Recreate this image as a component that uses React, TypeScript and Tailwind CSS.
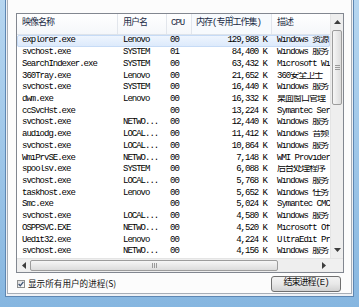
import React from "react";

type Row = [string, string, string, string, string];

// descriptions are cut where the column ends in the original window
const rows: Row[] = [
  ["explorer.exe", "Lenovo", "00", "129,988 K", "Windows 资源"],
  ["svchost.exe", "SYSTEM", "01", "84,400 K", "Windows 服务"],
  ["SearchIndexer.exe", "SYSTEM", "00", "63,432 K", "Microsoft Wi"],
  ["360Tray.exe", "Lenovo", "00", "21,652 K", "360安全卫士"],
  ["svchost.exe", "SYSTEM", "00", "16,440 K", "Windows 服务"],
  ["dwm.exe", "Lenovo", "00", "16,332 K", "桌面窗口管理"],
  ["ccSvcHst.exe", "", "00", "13,224 K", "Symantec Ser"],
  ["svchost.exe", "NETWO...", "00", "12,440 K", "Windows 服务"],
  ["audiodg.exe", "LOCAL...", "00", "11,412 K", "Windows 音频"],
  ["svchost.exe", "LOCAL...", "00", "10,864 K", "Windows 服务"],
  ["WmiPrvSE.exe", "NETWO...", "00", "7,148 K", "WMI Provider"],
  ["spoolsv.exe", "SYSTEM", "00", "6,088 K", "后台处理程序"],
  ["svchost.exe", "LOCAL...", "00", "5,768 K", "Windows 服务"],
  ["taskhost.exe", "Lenovo", "00", "5,652 K", "Windows 任务"],
  ["Smc.exe", "", "00", "5,024 K", "Symantec CMC"],
  ["svchost.exe", "LOCAL...", "00", "4,580 K", "Windows 服务"],
  ["OSPPSVC.EXE", "NETWO...", "00", "4,520 K", "Microsoft Of"],
  ["Uedit32.exe", "Lenovo", "00", "4,224 K", "UltraEdit Pr"],
  ["svchost.exe", "NETWO...", "00", "4,156 K", "Windows 服务"],
];

const mono = "font-['Liberation_Mono','Noto_Sans_CJK_SC',monospace] text-[9px] tracking-[-1px]";

const Arrow = ({ dir }: { dir: "up" | "down" | "left" | "right" }) => {
  const pts = {
    up: "0,4 3.5,0 7,4",
    down: "0,0 3.5,4 7,0",
    left: "4,0 0,3.5 4,7",
    right: "0,0 4,3.5 0,7",
  }[dir];
  const vert = dir === "up" || dir === "down";
  return (
    <svg width={vert ? 7 : 4} height={vert ? 4 : 7} viewBox={vert ? "0 0 7 4" : "0 0 4 7"}>
      <polygon points={pts} fill="#3c3c3c" />
    </svg>
  );
};

const App = () => {
  return (
    <div className="w-[359px] h-[307px] bg-gradient-to-b from-[#b6d6f0] to-[#86b6e0] pl-[5px] pr-[6px] pb-[10px] flex">
      {/* window body */}
      <div className="flex-1 bg-[#eef1f5] border-l border-r border-b border-[#5d87b3] pl-[1px] pr-[1px] pb-[2px] flex">
        {/* tab page */}
        <div className="flex-1 bg-[#fcfcfc] border-l border-r border-b border-[#a7aeb7] pl-[8px] pr-[7px] pt-[13px] flex flex-col">
          {/* list view */}
          <div className="w-[328px] border border-[#828790] bg-white flex flex-col">
            <div className="flex">
              <div className="w-[313px] flex flex-col">
                {/* header */}
                <div className={`h-[21px] flex border-b border-[#dde3ea] bg-gradient-to-b from-white to-[#f5f7fa] text-[#1a2a44] ${mono}`}>
                  <div className="w-[101px] pl-[5px] flex items-center border-r border-[#e2e6ec]">映像名称</div>
                  <div className="w-[49px] pl-[5px] flex items-center border-r border-[#e2e6ec]">用户名</div>
                  <div className="w-[25px] pl-[4px] flex items-center border-r border-[#e2e6ec]">CPU</div>
                  <div className="relative w-[80px] pl-[4px] flex items-center border-r border-[#e2e6ec] bg-[#f7fafd]">
                    内存(专用工作集)
                    <svg className="absolute left-[36px] top-[1px]" width="7" height="4" viewBox="0 0 7 4">
                      <polyline points="0.5,3.5 3.5,0.8 6.5,3.5" fill="none" stroke="#9aa7b8" strokeWidth="1" />
                    </svg>
                  </div>
                  <div className="w-[58px] pl-[5px] flex items-center">描述</div>
                </div>
                {/* rows */}
                <div className={`flex flex-col text-black ${mono}`}>
                  {rows.map((r, i) => (
                    <div
                      key={i}
                      className={`h-[11.72px] flex items-center whitespace-nowrap leading-none ${
                        i === 0
                          ? "bg-gradient-to-b from-[#f0f6fe] to-[#dbe9fb] outline outline-1 -outline-offset-1 outline-[#c6dbf6] rounded-[2px]"
                          : ""
                      }`}
                    >
                      <div className="w-[101px] pl-[5px] overflow-hidden">{r[0]}</div>
                      <div className="w-[49px] pl-[5px] overflow-hidden">{r[1]}</div>
                      <div className="w-[25px] pl-[3px] overflow-hidden">{r[2]}</div>
                      <div className="w-[80px] pr-[5px] text-right overflow-hidden">{r[3]}</div>
                      <div className="w-[58px] pl-[5px] overflow-hidden">{r[4]}</div>
                    </div>
                  ))}
                </div>
              </div>
              {/* vertical scrollbar */}
              <div className="w-[13px] flex flex-col bg-[#eeeeee] border-l border-[#e4e4e4]">
                <div className="h-[15px] flex items-center justify-center">
                  <Arrow dir="up" />
                </div>
                <div className="mt-[1px] h-[75px] mx-[1px] rounded-[2px] border border-[#9c9c9c] bg-gradient-to-r from-[#f6f6f6] to-[#dcdcdc] flex flex-col items-center justify-center gap-[1px]">
                  <div className="w-[5px] h-[1px] bg-[#9a9a9a]" />
                  <div className="w-[5px] h-[1px] bg-[#9a9a9a]" />
                  <div className="w-[5px] h-[1px] bg-[#9a9a9a]" />
                </div>
                <div className="flex-1" />
                <div className="h-[15px] flex items-center justify-center">
                  <Arrow dir="down" />
                </div>
              </div>
            </div>
            {/* horizontal scrollbar */}
            <div className="h-[14px] flex bg-[#eeeeee] border-t border-[#e4e4e4]">
              <div className="w-[13px] flex items-center justify-center">
                <Arrow dir="left" />
              </div>
              <div className="w-[248px] my-[1px] rounded-[2px] border border-[#9c9c9c] bg-gradient-to-b from-[#f6f6f6] to-[#dcdcdc] flex items-center justify-center gap-[1px]">
                <div className="w-[1px] h-[5px] bg-[#9a9a9a]" />
                <div className="w-[1px] h-[5px] bg-[#9a9a9a]" />
                <div className="w-[1px] h-[5px] bg-[#9a9a9a]" />
              </div>
              <div className="flex-1" />
              <div className="w-[13px] flex items-center justify-center">
                <Arrow dir="right" />
              </div>
              <div className="w-[13px] bg-[#f0f0f0]" />
            </div>
          </div>
          {/* bottom row */}
          <div className="mt-[3px] h-[16px] flex items-center justify-between pl-[1px] pr-[3px]">
            <div className="flex items-center gap-[3px]">
              <div className="w-[8px] h-[8px] border border-[#8e8f8f] bg-gradient-to-br from-[#dcdcdc] to-white flex items-center justify-center">
                <svg width="6" height="6" viewBox="0 0 6 6">
                  <polyline points="0.6,3 2.3,4.8 5.4,0.8" fill="none" stroke="#3f5476" strokeWidth="1.3" />
                </svg>
              </div>
              <span className="font-['Noto_Sans_CJK_SC',sans-serif] text-[8.6px] leading-none text-[#111]">
                显示所有用户的进程(S)
              </span>
            </div>
            <div
              className={`w-[70px] h-[16px] rounded-[3px] border border-[#707070] bg-gradient-to-b from-[#f3f3f3] via-[#e8e8e8] to-[#d2d2d2] flex items-center justify-center text-[#111] ${mono}`}
            >
              结束进程(E)
            </div>
          </div>
        </div>
      </div>
    </div>
  );
};

export default App;
